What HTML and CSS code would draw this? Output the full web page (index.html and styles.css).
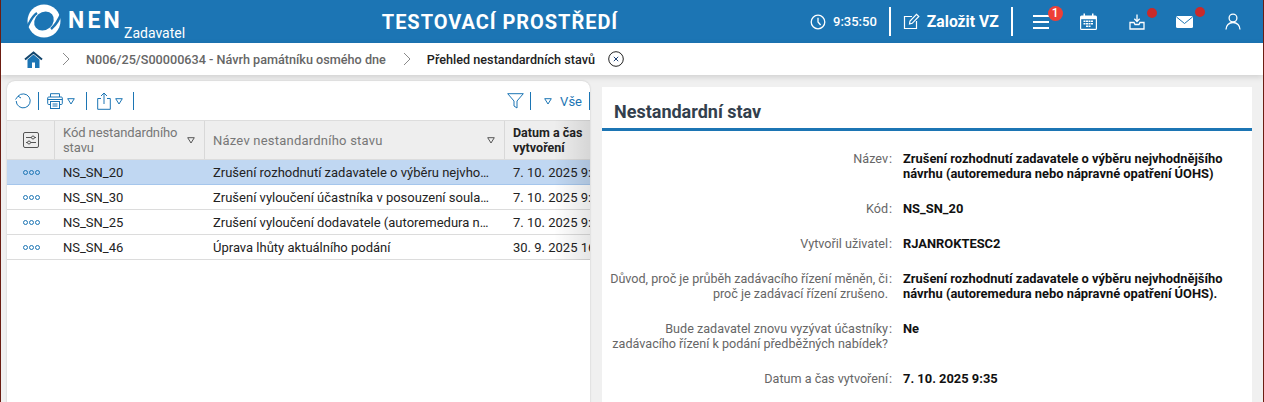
FILE: index.html
```html
<!DOCTYPE html>
<html lang="cs">
<head>
<meta charset="utf-8">
<title>Přehled nestandardních stavů</title>
<link rel="stylesheet" href="styles.css">
</head>
<body>
<div class="page">
  <header class="topbar">
    <div class="brand">
      <svg class="logo" width="34" height="34" viewBox="0 0 34 34"><circle cx="17" cy="17" r="16.500" fill="#fff"/><ellipse cx="17" cy="17" rx="10.500" ry="8.800" transform="rotate(-40 17 17)" fill="#1c75b4"/><path d="M-1 25C3 19 4 13 10 9" fill="none" stroke="#1c75b4" stroke-width="2.400"/><path d="M35 8C32 15 30 20 24 25" fill="none" stroke="#1c75b4" stroke-width="2.400"/></svg>
      <span class="brand-name">NEN</span>
      <span class="brand-role">Zadavatel</span>
    </div>
    <div class="env">TESTOVACÍ PROSTŘEDÍ</div>
    <div class="tools">
      <svg class="ic-clock" width="16" height="16" viewBox="0 0 16 16" fill="none" stroke="#fff" stroke-width="1.300"><circle cx="8" cy="8" r="6.800"/><path d="M8 3.800V8l2.600 3"/></svg>
      <span class="time">9:35:50</span>
      <span class="vsep"></span>
      <svg class="ic-edit" width="17" height="17" viewBox="0 0 17 17" fill="none" stroke="#fff" stroke-width="1.200"><path d="M9 3.500H1.500V15.500H13.500V8"/><path d="M6.500 11L7 8 13.500 1.300 15.800 3.500 9.200 10.300Z"/></svg>
      <span class="create">Založit VZ</span>
      <span class="vsep"></span>
      <span class="menu-wrap">
        <svg width="16" height="14" viewBox="0 0 16 14" fill="#fff"><rect y="0" width="16" height="2"/><rect y="6" width="16" height="2"/><rect y="12" width="16" height="2"/></svg>
        <span class="badge">1</span>
      </span>
      <svg class="ic-cal" width="17" height="17" viewBox="0 0 17 17"><path fill="#fff" d="M0 4A1.500 1.500 0 0 1 1.500 2.500H3.500V.5H5V2.500H12V.5H13.500V2.500H15.500A1.500 1.500 0 0 1 17 4V15.500A1.500 1.500 0 0 1 15.500 17H1.500A1.500 1.500 0 0 1 0 15.500Z"/><path fill="#1c75b4" d="M1.200 6.200H15.800V15.800H1.200Z"/><path fill="#fff" d="M3.500 7.500h2v1.500h-2zM6 7.500h2v1.500H6zM8.500 7.500h2v1.500h-2zM11 7.500h2v1.500h-2zM3.500 10h2v1.500h-2zM6 10h2v1.500H6zM8.500 10h2v1.500h-2zM11 10h2v1.500h-2zM6 12.500h2V14H6zM8.500 12.500h2V14h-2z"/></svg>
      <span class="dot-wrap dot-dl">
        <svg width="16" height="16" viewBox="0 0 16 16" fill="none" stroke="#fff" stroke-width="1.300"><path d="M8 .5V7M5.300 4.800L8 7.500 10.700 4.800"/><path d="M5 8.500H1V15H15V8.500H11L10 10.500H6Z"/></svg>
        <span class="dot"></span>
      </span>
      <span class="dot-wrap dot-mail">
        <svg width="17" height="12" viewBox="0 0 17 12"><rect width="17" height="12" rx="1.500" fill="#fff"/><path d="M.5 1L8.500 7.500 16.500 1" fill="none" stroke="#1c75b4" stroke-width="1"/></svg>
        <span class="dot"></span>
      </span>
      <svg class="ic-user" width="16" height="17" viewBox="0 0 16 17" fill="none" stroke="#fff" stroke-width="1.300"><circle cx="8" cy="5" r="3.900"/><path d="M1 16.500C1 12.500 4 9.500 8 9.500S15 12.500 15 16.500"/></svg>
    </div>
  </header>

  <nav class="crumbs">
    <svg class="home" width="19" height="17" viewBox="0 0 19 17"><path fill="#1c75b4" d="M3.500 8.500L9.500 3.500 15.500 8.500V17H11V11.500H8V17H3.500Z"/><path fill="none" stroke="#12456d" stroke-width="2" d="M1 8.500L9.500 1.500 18 8.500"/></svg>
    <svg class="chev" width="8" height="14" viewBox="0 0 8 14" fill="none" stroke="#8a8a8a"><path d="M1 1L7 7 1 13"/></svg>
    <span class="crumb">N006/25/S00000634 - Návrh památníku osmého dne</span>
    <svg class="chev chev-b" width="8" height="14" viewBox="0 0 8 14" fill="none" stroke="#8a8a8a"><path d="M1 1L7 7 1 13"/></svg>
    <span class="crumb-cur">Přehled nestandardních stavů</span>
    <svg class="crumb-x" width="16" height="16" viewBox="0 0 16 16" fill="none" stroke="#222"><circle cx="8" cy="8" r="7.300"/><path d="M5.800 5.800L10.200 10.200M10.200 5.800L5.800 10.200" stroke="#1c3f73"/></svg>
  </nav>

  <main class="content">
    <section class="list">
      <div class="toolbar">
        <svg class="t-refresh" width="16" height="16" viewBox="0 0 16 16" fill="none" stroke="#1c75b4"><path d="M3 3.200A7 7 0 1 1 1.200 8"/><path d="M.5 6.500L3 3.200 6 5"/></svg>
        <span class="tsep"></span>
        <svg class="t-print" width="16" height="16" viewBox="0 0 16 16" fill="none" stroke="#1c75b4"><path d="M3.500 4V.7H12.500V4"/><rect x=".7" y="4" width="14.600" height="7.500" rx="1"/><path d="M.7 6.500H15.300"/><rect x="3.500" y="8.500" width="9" height="7" fill="#fff"/><path d="M5.500 11H10.500M5.500 13H10.500"/></svg>
        <svg class="tri" width="8" height="7" viewBox="0 0 8 7" fill="none" stroke="#1c75b4"><path d="M.7.700H7.300L4 6Z"/></svg>
        <span class="tsep tsep-wide"></span>
        <svg class="t-share" width="14" height="18" viewBox="0 0 14 18" fill="none" stroke="#1c75b4"><path d="M4 6.500H.7V17.300H13.300V6.500H10"/><path d="M7 12V1M4 4L7 1 10 4"/></svg>
        <svg class="tri" width="8" height="7" viewBox="0 0 8 7" fill="none" stroke="#1c75b4"><path d="M.7.700H7.300L4 6Z"/></svg>
        <span class="tsep tsep-end"></span>
        <span class="tspace"></span>
        <svg class="t-filter" width="17" height="16" viewBox="0 0 17 16" fill="none" stroke="#1c75b4"><path d="M.7.700H16.300L10 8V15L7 13V8Z"/></svg>
        <span class="tsep tsep-filter"></span>
        <svg class="tri tri-all" width="8" height="7" viewBox="0 0 8 7" fill="none" stroke="#1c75b4"><path d="M.7.700H7.300L4 6Z"/></svg>
        <span class="all">Vše</span>
        <span class="tsep tsep-last"></span>
      </div>
      <div class="grid">
        <div class="row head">
          <div class="cell c-act"><svg width="16" height="16" viewBox="0 0 16 16" fill="none" stroke="#555"><rect x=".5" y=".5" width="15" height="15" rx="1.500"/><path d="M3 5.500H13M3 10.500H13"/><circle cx="10" cy="5.500" r="1.500" fill="#eee"/><circle cx="6" cy="10.500" r="1.500" fill="#eee"/></svg></div>
          <div class="cell c-code"><span class="hlabel">Kód nestandardního stavu</span><svg class="sort" width="8" height="7" viewBox="0 0 8 7" fill="none" stroke="#555"><path d="M.7.700H7.300L4 6Z"/></svg></div>
          <div class="cell c-name"><span class="hlabel">Název nestandardního stavu</span><svg class="sort" width="8" height="7" viewBox="0 0 8 7" fill="none" stroke="#555"><path d="M.7.700H7.300L4 6Z"/></svg></div>
          <div class="cell c-date"><span class="hlabel-b">Datum a čas vytvoření</span></div>
        </div>
        <div class="row sel">
          <div class="cell c-act"><span class="dots"><i></i><i></i><i></i></span></div>
          <div class="cell c-code">NS_SN_20</div>
          <div class="cell c-name"><span class="ell">Zrušení rozhodnutí zadavatele o výběru nejvhodnějšího návrhu</span></div>
          <div class="cell c-date">7. 10. 2025 9:35</div>
        </div>
        <div class="row">
          <div class="cell c-act"><span class="dots"><i></i><i></i><i></i></span></div>
          <div class="cell c-code">NS_SN_30</div>
          <div class="cell c-name"><span class="ell">Zrušení vyloučení účastníka v posouzení souladu s podmínkami</span></div>
          <div class="cell c-date">7. 10. 2025 9:35</div>
        </div>
        <div class="row">
          <div class="cell c-act"><span class="dots"><i></i><i></i><i></i></span></div>
          <div class="cell c-code">NS_SN_25</div>
          <div class="cell c-name"><span class="ell">Zrušení vyloučení dodavatele (autoremedura nebo nápravné opatření)</span></div>
          <div class="cell c-date">7. 10. 2025 9:35</div>
        </div>
        <div class="row">
          <div class="cell c-act"><span class="dots"><i></i><i></i><i></i></span></div>
          <div class="cell c-code">NS_SN_46</div>
          <div class="cell c-name"><span class="ell">Úprava lhůty aktuálního podání</span></div>
          <div class="cell c-date">30. 9. 2025 16:20</div>
        </div>
        <div class="fade"></div>
      </div>
    </section>

    <section class="detail">
      <h2 class="detail-title">Nestandardní stav</h2>
      <div class="fields">
        <div class="field"><div class="flabel"><span class="ltext">Název</span><span class="colon">:</span></div><div class="fvalue">Zrušení rozhodnutí zadavatele o výběru nejvhodnějšího návrhu (autoremedura nebo nápravné opatření ÚOHS)</div></div>
        <div class="field"><div class="flabel"><span class="ltext">Kód</span><span class="colon">:</span></div><div class="fvalue">NS_SN_20</div></div>
        <div class="field"><div class="flabel"><span class="ltext">Vytvořil uživatel</span><span class="colon">:</span></div><div class="fvalue">RJANROKTESC2</div></div>
        <div class="field"><div class="flabel"><span class="ltext">Důvod, proč je průběh zadávacího řízení měněn, či proč je zadávací řízení zrušeno.</span><span class="colon">:</span></div><div class="fvalue">Zrušení rozhodnutí zadavatele o výběru nejvhodnějšího návrhu (autoremedura nebo nápravné opatření ÚOHS).</div></div>
        <div class="field"><div class="flabel"><span class="ltext">Bude zadavatel znovu vyzývat účastníky zadávacího řízení k podání předběžných nabídek?</span><span class="colon">:</span></div><div class="fvalue">Ne</div></div>
        <div class="field"><div class="flabel"><span class="ltext">Datum a čas vytvoření</span><span class="colon">:</span></div><div class="fvalue">7. 10. 2025 9:35</div></div>
      </div>
    </section>
  </main>
</div>
</body>
</html>
```
FILE: styles.css
```css
* { box-sizing: border-box; }
html, body { margin: 0; padding: 0; height: 100%; overflow: hidden; }
body { font-family: Roboto, "Liberation Sans", sans-serif; background: #f0f0f0; color: #222; }
.page { height: 402px; display: flex; flex-direction: column; border-left: 1px solid #6b1d12; border-right: 1px solid #6b1d12; overflow: hidden; }

.topbar { height: 43px; flex: none; background: #1c75b4; color: #fff; display: flex; align-items: center; padding-left: 26px; }
.brand { width: 325px; display: flex; align-items: center; flex: none; height: 43px; }
.logo { flex: none; margin-bottom: 1px; }
.brand-name { font-weight: 700; font-size: 23px; letter-spacing: 3.2px; margin-left: 7px; margin-bottom: 2px; }
.brand-role { font-size: 14px; align-self: flex-end; margin-left: 1px; padding-bottom: 2px; }
.env { width: 296px; text-align: center; font-weight: 700; font-size: 20px; letter-spacing: .95px; flex: none; }
.tools { flex: 1; display: flex; align-items: center; padding-left: 162px; }
.time { font-size: 13px; margin-left: 7px; font-weight: 500; }
.vsep { width: 2px; height: 29px; background: #fff; margin-left: 12px; }
.ic-edit { margin-left: 12px; }
.create { font-weight: 700; font-size: 15.700px; margin-left: 7px; }
.menu-wrap { position: relative; display: flex; margin-left: 20px; }
.badge { position: absolute; left: 15px; top: -9px; width: 15px; height: 15px; border-radius: 50%; background: #ee3f36; font-size: 12px; font-weight: 500; text-align: center; line-height: 15px; }
.ic-cal { margin-left: 31px; }
.dot-wrap { position: relative; display: flex; }
.dot-dl { margin-left: 32px; }
.dot-mail { margin-left: 31px; }
.dot { position: absolute; width: 10px; height: 10px; border-radius: 50%; background: #c92a2a; left: 18px; top: -6px; }
.dot-mail .dot { left: 19px; top: -9px; }
.ic-user { margin-left: 32px; }

.crumbs { height: 32px; flex: none; background: #fff; display: flex; align-items: center; padding-left: 23px; box-shadow: 0 2px 6px rgba(0,0,0,.14); position: relative; z-index: 1; font-size: 12.650px; font-weight: 500; }
.chev { margin-left: 19px; flex: none; }
.crumb { margin-left: 16px; color: #666; }
.chev-b { margin-left: 17px; }
.crumb-cur { margin-left: 16px; color: #222; }
.crumb-x { margin-left: 13px; }

.content { flex: 1; display: flex; align-items: flex-start; padding: 6px 11px 0 6px; gap: 12px; min-height: 0; }
.list { width: 583px; height: 340px; flex: none; background: #fff; border-radius: 8px 8px 0 0; overflow: hidden; display: flex; flex-direction: column; box-shadow: 0 0 2px rgba(0,0,0,.2); }
.toolbar { height: 39px; flex: none; display: flex; align-items: center; padding: 1px 0 0 8px; }
.tsep { width: 1px; height: 18px; background: #1c75b4; margin-left: 7px; flex: none; }
.tsep-wide { margin-left: 11px; }
.tsep-end { margin-left: 10px; }
.tsep-filter { margin-left: 6px; }
.t-print { margin-left: 8px; }
.tri { margin-left: 4px; flex: none; }
.t-share { margin-left: 10px; }
.tspace { flex: 1; }
.tri-all { margin-left: 13px; }
.all { font-size: 13px; color: #1c75b4; margin-left: 8px; }
.tsep-last { margin-left: 7px; }

.grid { position: relative; flex: 1; overflow: hidden; }
.row { display: flex; height: 25px; border-bottom: 1px solid #dcdcdc; font-size: 13px; align-items: stretch; }
.row.head { height: 40px; background: #eeeeee; font-size: 13px; color: #777; border-top: 1px solid #ddd; }
.row.sel { background: #c0d7f2; border-bottom-color: #a5c6ec; }
.cell { display: flex; align-items: center; flex: none; overflow: hidden; white-space: nowrap; padding-left: 8px; }
.head .cell { white-space: normal; line-height: 15px; border-right: 1px solid #d8d8d8; }
.head .c-date { border-right: 0; }
.c-act { width: 48px; padding-left: 0; justify-content: center; }
.c-code { width: 150px; }
.c-name { width: 300px; }
.c-date { width: 85px; }
.hlabel { flex: 1; }
.c-code .hlabel { max-width: 122px; letter-spacing: -.1px; }
.c-name .hlabel { letter-spacing: .22px; }
.hlabel-b { color: #222; font-weight: 700; font-size: 12.500px; width: 80px; }
.sort { margin: 0 9px 0 auto; flex: none; }
.ell { display: block; overflow: hidden; text-overflow: ellipsis; max-width: 279px; }
.dots { display: flex; gap: 1px; }
.dots i { width: 5px; height: 5px; border: 1px solid #1c75b4; border-radius: 50%; }
.fade { position: absolute; right: 0; top: 0; height: 140px; width: 36px; background: linear-gradient(to right, rgba(0,0,0,0), rgba(0,0,0,.1)); pointer-events: none; }

.detail { width: 650px; height: 340px; margin-top: 6px; flex: none; background: #fff; }
.detail-title { margin: 0; height: 44px; border-bottom: 3px solid #1c75b4; font-size: 18px; font-weight: 700; color: #333f4d; padding: 15px 0 0 12px; line-height: 20px; }
.fields { padding-top: 20px; }
.field { display: flex; margin-bottom: 20px; font-size: 12.600px; line-height: 15px; }
.flabel { width: 292px; flex: none; display: flex; color: #666; }
.ltext { flex: 1; text-align: right; }
.colon { width: 6px; text-align: left; padding-left: 1px; }
.fvalue { margin-left: 9px; width: 335px; color: #111; font-weight: 700; font-size: 12.900px; }
```
